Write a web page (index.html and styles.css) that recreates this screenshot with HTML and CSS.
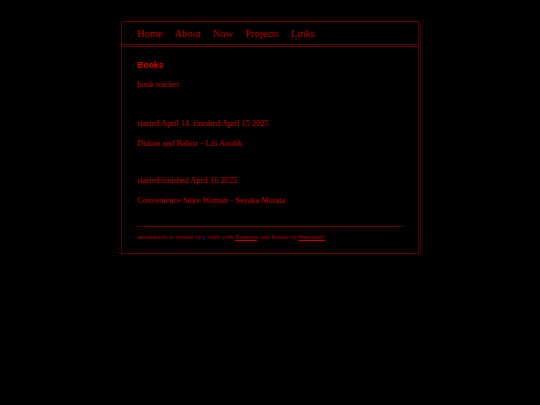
FILE: index.html
```html
<!DOCTYPE html>
<html>
<head>
<meta charset="utf-8">
<link rel="stylesheet" href="styles.css">
</head>
<body>
<div class="wrap">
  <nav class="nav">
    <a href="#">Home</a>
    <a href="#">About</a>
    <a href="#">Now</a>
    <a href="#">Projects</a>
    <a href="#">Links</a>
  </nav>
  <main class="main">
    <h2 class="title">Books</h2>
    <p class="txt">book tracker</p>
    <p class="txt gap">started April 14, finished April 15 2025</p>
    <p class="txt">Didion and Babitz - Lili Anolik</p>
    <p class="txt gap2">started/finished April 16 2025</p>
    <p class="txt">Convenience Store Woman - Sayaka Murata</p>
    <hr class="rule">
    <footer class="foot">sevendevils is written by <a class="plain" href="#">j</a>, built with <a href="#">Zonelets</a>, and hosted by <a href="#">Neocities!</a></footer>
  </main>
</div>
</body>
</html>
```
FILE: styles.css
```css
html, body {
  margin: 0;
  padding: 0;
  background: #000;
}
body {
  font-family: "Liberation Serif", serif;
  color: #c00000;
  padding-top: 21px;
}
.wrap {
  width: 296px;
  margin-left: 121px;
  border: 1px solid #600000;
  box-shadow: 1px 1px 0 0 #000, 2px 2px 0 0 #4a0000;
}
.nav {
  height: 22px;
  border-bottom: 3px double #600000;
  display: flex;
  align-items: center;
  padding-left: 15px;
  gap: 12.2px;
  font-size: 10.4px;
}
.nav a {
  color: #b80000;
  text-decoration: none;
}
.main {
  padding: 12px 15px 11px 15px;
}
.title {
  margin: 0;
  font-family: "Liberation Sans", sans-serif;
  font-weight: bold;
  font-size: 8.6px;
  line-height: 12px;
  color: #d00000;
}
.txt {
  margin: 8px 0 0 0;
  font-size: 8.35px;
  line-height: 12px;
  color: #c00000;
}
.gap { margin-top: 27px; }
.gap2 { margin-top: 25px; }
.rule {
  margin: 19px 0 0 0;
  border: 0;
  border-top: 1px solid #600000;
  height: 0;
}
.foot {
  margin-top: 5px;
  font-size: 6.5px;
  line-height: 10px;
  color: #b00000;
}
.foot a {
  color: #c00000;
}
.foot a.plain {
  text-decoration: none;
  color: #3030c0;
}
```
